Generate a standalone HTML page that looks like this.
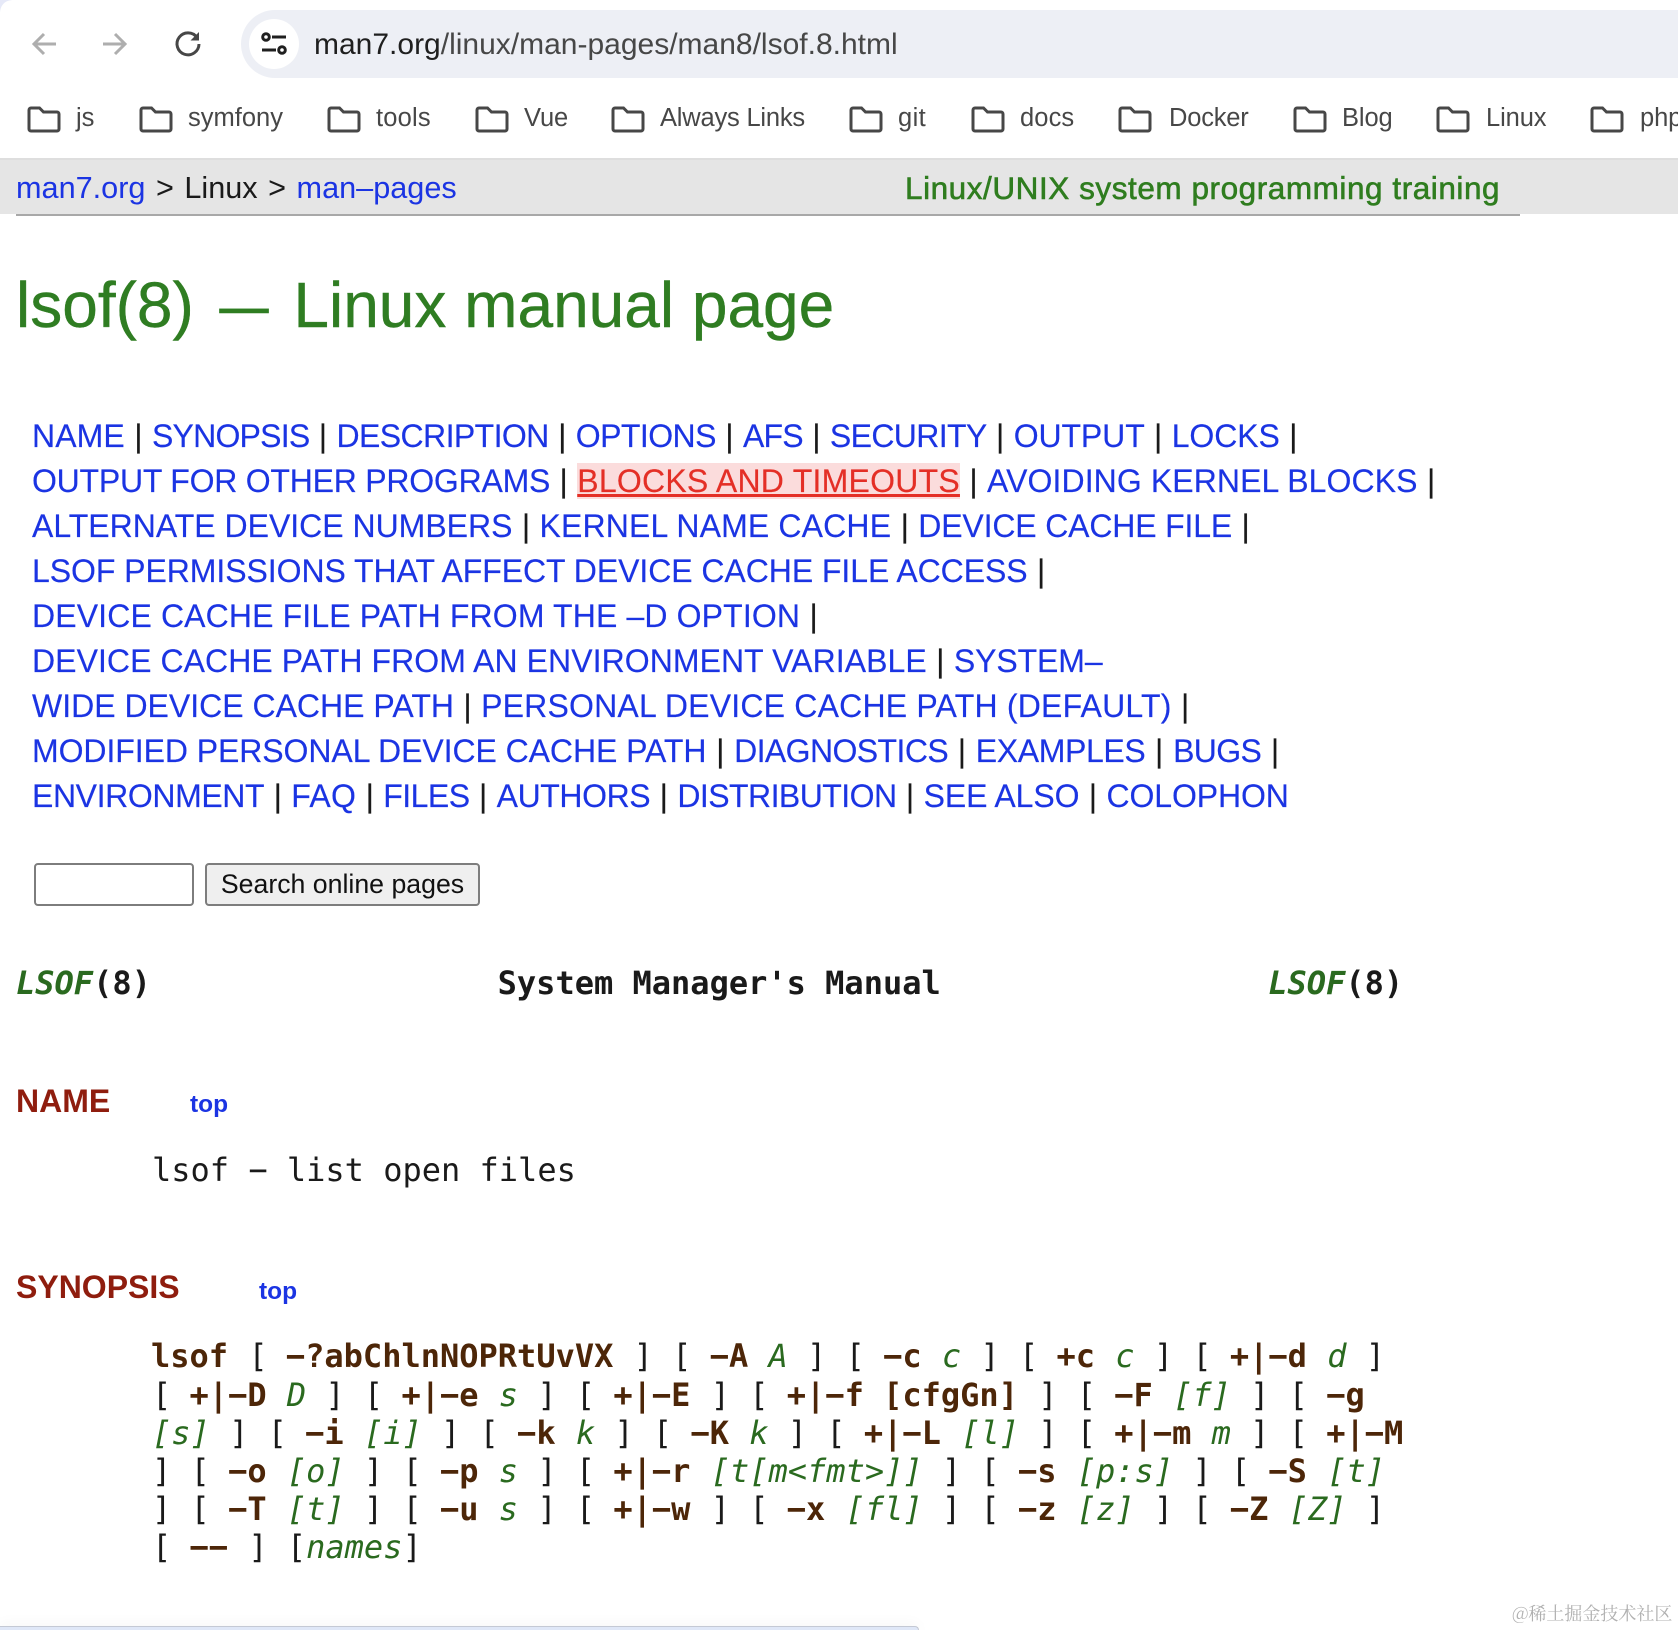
<!DOCTYPE html>
<html><head><meta charset="utf-8"><style>
html,body{margin:0;padding:0;background:#fff;width:1678px;height:1630px;overflow:hidden}
body{position:relative;font-family:"Liberation Sans",sans-serif}
.a{position:absolute;white-space:pre}
.n{left:32px;font-size:32px;line-height:45px;height:45px;color:#1a1a1a;word-spacing:.5px;-webkit-text-stroke:.15px}
a{color:#1b34e3;text-decoration:none;word-spacing:0}
.m{position:absolute;white-space:pre;font-family:"DejaVu Sans Mono",monospace;font-size:32px;line-height:38px;height:38px;color:#1a1a1a}
b{color:#4d2608;font-weight:700;position:relative;left:-1px}
i{color:#2a6a1f;font-style:italic}
.bm{position:absolute;top:104px;font-size:25.5px;line-height:28px;color:#474747;letter-spacing:-.1px;white-space:pre}
.f{position:absolute;top:105px;width:34px;height:28px}
</style></head><body>
<svg class="a" style="left:0;top:0" width="14" height="14" viewBox="0 0 14 14"><path d="M0 0h14C5 0 0 5 0 14z" fill="#e6e9f8"/></svg>
<div style="position:absolute;left:241px;top:10px;width:1500px;height:68px;border-radius:34px;background:#edeff5"></div>
<div style="position:absolute;left:249px;top:19px;width:50px;height:50px;border-radius:25px;background:#fff"></div>
<svg class="a" style="left:29px;top:28px" width="32" height="32" viewBox="0 0 32 32" fill="none" stroke="#aeaeae" stroke-width="3"><path d="M27 16H5M15 6L5 16l10 10"/></svg>
<svg class="a" style="left:99px;top:28px" width="32" height="32" viewBox="0 0 32 32" fill="none" stroke="#aeaeae" stroke-width="3"><path d="M4 16h22M16 6l10 10-10 10"/></svg>
<svg class="a" style="left:172px;top:28px" width="32" height="32" viewBox="0 0 32 32" fill="none" stroke="#474747" stroke-width="3"><path d="M25 9.500A11 11 0 1 0 27 16"/><path d="M27 4v8.500h-8.500z" fill="#474747" stroke="none"/></svg>
<svg class="a" style="left:260px;top:30px" width="28" height="28" viewBox="0 0 28 28" fill="none" stroke="#1f1f1f" stroke-width="3"><circle cx="6" cy="7" r="3.300"/><path d="M12 7h14M2 20h14"/><circle cx="22" cy="20" r="3.300"/></svg>
<div class="a" style="left:314px;top:25px;font-size:30px;line-height:40px;color:#474747"><span style="color:#1f1f1f">man7.org</span>/linux/man-pages/man8/lsof.8.html</div>

<svg width="0" height="0" style="position:absolute"><defs><symbol id="fd" viewBox="0 0 34 28"><path d="M2 5a2 2 0 0 1 2-2h8.500l4 4H30a2 2 0 0 1 2 2v15a2 2 0 0 1-2 2H4a2 2 0 0 1-2-2z" fill="none" stroke="#474747" stroke-width="3"/></symbol></defs></svg>
<svg class="f" style="left:27px"><use href="#fd"/></svg><div class="bm" style="left:76px">js</div>
<svg class="f" style="left:139px"><use href="#fd"/></svg><div class="bm" style="left:188px;letter-spacing:0">symfony</div>
<svg class="f" style="left:327px"><use href="#fd"/></svg><div class="bm" style="left:376px;letter-spacing:.2px">tools</div>
<svg class="f" style="left:475px"><use href="#fd"/></svg><div class="bm" style="left:524px">Vue</div>
<svg class="f" style="left:611px"><use href="#fd"/></svg><div class="bm" style="left:660px;letter-spacing:-.2px">Always Links</div>
<svg class="f" style="left:849px"><use href="#fd"/></svg><div class="bm" style="left:898px;letter-spacing:.4px">git</div>
<svg class="f" style="left:971px"><use href="#fd"/></svg><div class="bm" style="left:1020px;letter-spacing:.1px">docs</div>
<svg class="f" style="left:1118px"><use href="#fd"/></svg><div class="bm" style="left:1169px;letter-spacing:-.2px">Docker</div>
<svg class="f" style="left:1293px"><use href="#fd"/></svg><div class="bm" style="left:1342px">Blog</div>
<svg class="f" style="left:1436px"><use href="#fd"/></svg><div class="bm" style="left:1486px">Linux</div>
<svg class="f" style="left:1590px"><use href="#fd"/></svg><div class="bm" style="left:1640px">php</div>

<div style="position:absolute;left:0;top:158px;width:1678px;height:56px;background:#e5e5e5;border-top:2px solid #dedede;box-sizing:border-box"></div>
<div style="position:absolute;left:16px;top:214px;width:1504px;height:2px;background:#a8a8a8"></div>
<div class="a" style="left:16px;top:166px;font-size:30.650px;line-height:44px;color:#1a1a1a;word-spacing:2px"><a>man7.org</a> &gt; Linux &gt; <a>man–pages</a></div>
<div class="a" style="left:905px;top:166px;font-size:31.500px;line-height:44px;color:#2f7d1f;letter-spacing:.55px;-webkit-text-stroke:.6px #2f7d1f">Linux/UNIX system programming training</div>

<div class="a" style="left:16px;top:264px;font-size:64px;line-height:82px;color:#2f7d22;-webkit-text-stroke:.4px #2f7d22">lsof(8) <span style="display:inline-block;transform:scaleX(.77)">—</span> Linux manual page</div>

<div class="a n" style="top:414px"><a style="letter-spacing:.1px">NAME</a> | <a style="letter-spacing:-.77px">SYNOPSIS</a> | <a style="letter-spacing:-.59px">DESCRIPTION</a> | <a style="letter-spacing:-.56px">OPTIONS</a> | <a style="letter-spacing:-.81px">AFS</a> | <a style="letter-spacing:-.64px">SECURITY</a> | <a style="letter-spacing:-.1px">OUTPUT</a> | <a style="letter-spacing:-.1px">LOCKS</a> |</div>
<div class="a n" style="top:459px"><a style="letter-spacing:-.23px">OUTPUT FOR OTHER PROGRAMS</a> | <a style="background:#fbdcdc;color:#e42f26;text-decoration:underline;letter-spacing:.24px">BLOCKS AND TIMEOUTS</a> | <a style="letter-spacing:.09px">AVOIDING KERNEL BLOCKS</a> |</div>
<div class="a n" style="top:504px"><a style="letter-spacing:-.01px">ALTERNATE DEVICE NUMBERS</a> | <a style="letter-spacing:.15px">KERNEL NAME CACHE</a> | <a style="letter-spacing:-.16px">DEVICE CACHE FILE</a> |</div>
<div class="a n" style="top:549px"><a style="letter-spacing:-.06px">LSOF PERMISSIONS THAT AFFECT DEVICE CACHE FILE ACCESS</a> |</div>
<div class="a n" style="top:594px"><a style="letter-spacing:.13px">DEVICE CACHE FILE PATH FROM THE –D OPTION</a> |</div>
<div class="a n" style="top:639px"><a style="letter-spacing:.06px">DEVICE CACHE PATH FROM AN ENVIRONMENT VARIABLE</a> | <a style="letter-spacing:-.1px">SYSTEM–</a></div>
<div class="a n" style="top:684px"><a>WIDE DEVICE CACHE PATH</a> | <a style="letter-spacing:.2px">PERSONAL DEVICE CACHE PATH (DEFAULT)</a> |</div>
<div class="a n" style="top:729px;word-spacing:.8px"><a style="letter-spacing:-.07px">MODIFIED PERSONAL DEVICE CACHE PATH</a> | <a style="letter-spacing:-.59px">DIAGNOSTICS</a> | <a style="letter-spacing:-.37px">EXAMPLES</a> | <a style="letter-spacing:-.64px">BUGS</a> |</div>
<div class="a n" style="top:774px"><a style="letter-spacing:-.39px">ENVIRONMENT</a> | <a style="letter-spacing:.3px">FAQ</a> | <a style="letter-spacing:-.53px">FILES</a> | <a style="letter-spacing:-.41px">AUTHORS</a> | <a style="letter-spacing:-.55px">DISTRIBUTION</a> | <a style="letter-spacing:-.1px">SEE ALSO</a> | <a style="letter-spacing:-.1px">COLOPHON</a></div>

<div style="position:absolute;left:34px;top:863px;width:160px;height:43px;box-sizing:border-box;border:2px solid #7d7d7d;border-radius:4px;background:#fff"></div>
<div class="a" style="left:205px;top:863px;width:275px;height:43px;box-sizing:border-box;border:2px solid #7d7d7d;border-radius:4px;background:#efefef;font-size:26.700px;line-height:39px;text-align:center;color:#111">Search online pages</div>

<div class="m" style="left:16px;top:964px;font-weight:700"><i style="font-weight:700">LSOF</i>(8)                  System Manager's Manual                 <i style="font-weight:700">LSOF</i>(8)</div>

<div class="a" style="left:16px;top:1080px;font-size:32px;line-height:42px;font-weight:700;color:#8f1d0e">NAME</div>
<div class="a" style="left:190px;top:1089px;font-size:24.500px;line-height:32px;font-weight:700;color:#1b34e3">top</div>
<div class="m" style="left:152px;top:1151px">lsof − list open files</div>

<div class="a" style="left:16px;top:1266px;font-size:32px;line-height:42px;font-weight:700;color:#8f1d0e">SYNOPSIS</div>
<div class="a" style="left:259px;top:1276px;font-size:24.500px;line-height:32px;font-weight:700;color:#1b34e3">top</div>

<div class="m" style="left:152px;top:1337px"><b>lsof</b> [ <b>−?abChlnNOPRtUvVX</b> ] [ <b>−A</b> <i>A</i> ] [ <b>−c</b> <i>c</i> ] [ <b>+c</b> <i>c</i> ] [ <b>+|−d</b> <i>d</i> ]</div>
<div class="m" style="left:152px;top:1376px">[ <b>+|−D</b> <i>D</i> ] [ <b>+|−e</b> <i>s</i> ] [ <b>+|−E</b> ] [ <b>+|−f [cfgGn]</b> ] [ <b>−F</b> <i>[f]</i> ] [ <b>−g</b></div>
<div class="m" style="left:152px;top:1414px"><i>[s]</i> ] [ <b>−i</b> <i>[i]</i> ] [ <b>−k</b> <i>k</i> ] [ <b>−K</b> <i>k</i> ] [ <b>+|−L</b> <i>[l]</i> ] [ <b>+|−m</b> <i>m</i> ] [ <b>+|−M</b></div>
<div class="m" style="left:152px;top:1452px">] [ <b>−o</b> <i>[o]</i> ] [ <b>−p</b> <i>s</i> ] [ <b>+|−r</b> <i>[t[m&lt;fmt&gt;]]</i> ] [ <b>−s</b> <i>[p:s]</i> ] [ <b>−S</b> <i>[t]</i></div>
<div class="m" style="left:152px;top:1490px">] [ <b>−T</b> <i>[t]</i> ] [ <b>−u</b> <i>s</i> ] [ <b>+|−w</b> ] [ <b>−x</b> <i>[fl]</i> ] [ <b>−z</b> <i>[z]</i> ] [ <b>−Z</b> <i>[Z]</i> ]</div>
<div class="m" style="left:152px;top:1528px">[ <b>−−</b> ] [<i>names</i>]</div>

<div style="position:absolute;left:0;top:1626px;width:919px;height:4px;background:#dfe7f7;border-top:1px solid #c4c9d4;border-right:1px solid #c4c9d4;border-radius:0 5px 0 0;box-shadow:0 0 14px rgba(0,0,0,.09);box-sizing:border-box"></div>
<div class="a" style="left:1512px;top:1601px;font-family:'Noto Serif CJK SC','Noto Sans CJK SC',serif;font-size:18px;line-height:24px;color:#b0b0b0">@稀土掘金技术社区</div>
</body></html>
